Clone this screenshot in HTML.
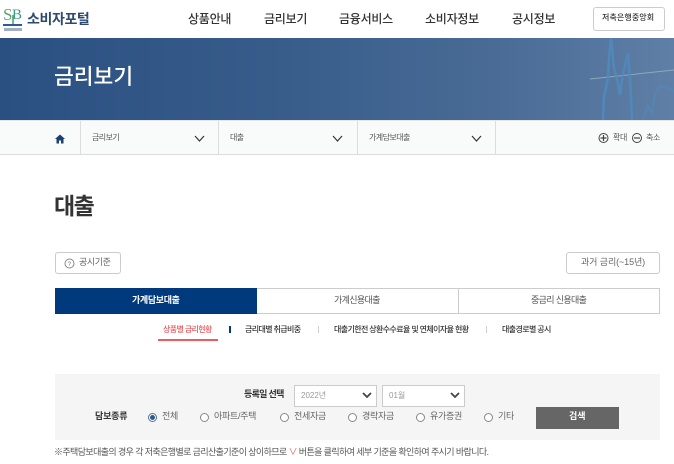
<!DOCTYPE html>
<html lang="ko"><head><meta charset="utf-8"><style>
html,body{margin:0;padding:0;width:674px;height:464px;overflow:hidden;background:#fff;font-family:"Liberation Sans","Noto Sans CJK KR",sans-serif;color:#333}
.t{position:absolute;white-space:nowrap;line-height:1}
.b{position:absolute;box-sizing:border-box}
.nav{font-size:12px;color:#333;top:13px;font-weight:500;letter-spacing:-.25px}
.cr{font-size:8px;color:#555;top:134px;letter-spacing:-.55px}
.sub{font-size:8px;color:#333;top:326px;font-weight:500;letter-spacing:-.62px}
.r{position:absolute;top:413px;width:7px;height:7px;border:1px solid #888;border-radius:50%;background:#fff}
.rl{font-size:9px;color:#666;top:412px;letter-spacing:-.3px}
</style></head><body>
<svg style="position:absolute;left:3px;top:5px" width="21" height="28" viewBox="0 0 21 28">
<text x="0" y="15" font-family="Liberation Serif" font-size="17" fill="#5aa56a">S</text>
<text x="9" y="14" font-family="Liberation Serif" font-size="15" fill="#3f9a8a">B</text>
<path d="M10 10V19" stroke="#4a9a5a" stroke-width="1.500"/>
<path d="M0 20H19" stroke="#2a5d96" stroke-width="2"/>
<rect x="1" y="23" width="18" height="3" fill="#9fb0c4"/>
</svg>
<div class="t" style="left:27px;top:12px;font-size:14px;font-weight:700;color:#2c4a70;letter-spacing:-.4px">소비자포털</div>
<div class="t nav" style="left:188px">상품안내</div>
<div class="t nav" style="left:264px">금리보기</div>
<div class="t nav" style="left:339px">금융서비스</div>
<div class="t nav" style="left:425px">소비자정보</div>
<div class="t nav" style="left:512px">공시정보</div>
<div class="b" style="left:593px;top:7px;width:72px;height:24px;border:1px solid #ccc;border-radius:3px"></div>
<div class="t" style="left:602px;top:14px;font-size:8px;color:#333;font-weight:500;letter-spacing:.1px">저축은행중앙회</div>

<div class="b" style="left:0;top:38px;width:674px;height:82px;background:linear-gradient(90deg,#2a5082 0%,#375c8a 40%,#4a6c96 75%,#5f7fa6 100%);overflow:hidden">
<svg width="674" height="82" style="position:absolute;left:0;top:0">
<path d="M590 41L674 32" stroke="#8fa6bf" stroke-width="1"/>
<path d="M603 82L604 58L608 40L609 20L611 0M611 0L614 30L618 45L620 57L623 35L628 15L630 40L632 82" stroke="#4f8cc0" stroke-width="2.500" fill="none" opacity=".8"/>
<path d="M643 82L648 68L652 76L655 55L660 48L668 50L674 54" stroke="#4f8cc0" stroke-width="2" fill="none" opacity=".6"/>
</svg></div>
<div class="t" style="left:54px;top:67px;font-size:21.500px;color:#fff;font-weight:500">금리보기</div>

<div class="b" style="left:0;top:120px;width:674px;height:35px;background:#f9fafa;border-top:1px solid #e4e6e8;border-bottom:1px solid #ddd"></div>
<div class="b" style="left:80px;top:121px;width:1px;height:33px;background:#ddd"></div>
<div class="b" style="left:218px;top:121px;width:1px;height:33px;background:#ddd"></div>
<div class="b" style="left:357px;top:121px;width:1px;height:33px;background:#ddd"></div>
<div class="b" style="left:495px;top:121px;width:1px;height:33px;background:#ddd"></div>
<svg style="position:absolute;left:55px;top:134px" width="10" height="10" viewBox="0 0 10 10"><path d="M5 .5L10 5H8.500V9.500H6V6.500H4V9.500H1.500V5H0Z" fill="#1c3f70"/></svg>
<div class="t cr" style="left:92px">금리보기</div>
<div class="t cr" style="left:230px">대출</div>
<div class="t cr" style="left:369px">가계담보대출</div>
<svg style="position:absolute;left:0;top:0" width="674" height="160">
<path d="M195 136L199.500 141L204 136M333 136L337.500 141L342 136M472 136L476.500 141L481 136" fill="none" stroke="#333" stroke-width="1.200"/>
<circle cx="603.500" cy="138" r="4.500" fill="none" stroke="#444"/><path d="M600.500 138H606.500M603.500 135V141" stroke="#444" stroke-width="1.200"/>
<circle cx="637" cy="138" r="4.500" fill="none" stroke="#444"/><path d="M634 138H640" stroke="#444" stroke-width="1.200"/>
</svg>
<div class="t" style="left:613px;top:134px;font-size:8px;color:#555;letter-spacing:-.3px">확대</div>
<div class="t" style="left:646px;top:134px;font-size:8px;color:#555;letter-spacing:-.3px">축소</div>

<div class="t" style="left:54px;top:195px;font-size:23px;font-weight:700;color:#333;letter-spacing:-1.500px">대출</div>

<div class="b" style="left:55px;top:252px;width:66px;height:22px;border:1px solid #ccc;border-radius:3px"></div>
<svg style="position:absolute;left:64px;top:258px" width="11" height="11"><circle cx="5.500" cy="5.500" r="4.500" fill="none" stroke="#888"/><text x="3.500" y="8" font-size="6.500" fill="#777" font-family="Liberation Sans">?</text></svg>
<div class="t" style="left:79px;top:258px;font-size:9px;color:#666;letter-spacing:-.4px">공시기준</div>
<div class="b" style="left:566px;top:252px;width:94px;height:22px;border:1px solid #ccc;border-radius:3px"></div>
<div class="t" style="left:581px;top:258px;font-size:9px;color:#666;letter-spacing:-.1px">과거 금리(~15년)</div>

<div class="b" style="left:55px;top:288px;width:605px;height:26px;border:1px solid #ccc"></div>
<div class="b" style="left:55px;top:288px;width:202px;height:26px;background:#003a7d"></div>
<div class="b" style="left:458px;top:288px;width:1px;height:26px;background:#ccc"></div>
<div class="t" style="left:132px;top:296px;font-size:9px;color:#fff;font-weight:700;letter-spacing:-.35px">가계담보대출</div>
<div class="t" style="left:334px;top:296px;font-size:9px;color:#555;letter-spacing:-.65px">가계신용대출</div>
<div class="t" style="left:531px;top:296px;font-size:9px;color:#555;letter-spacing:-.65px">중금리 신용대출</div>

<div class="t sub" style="left:163px;color:#e8585c">상품별 금리현황</div>
<div class="b" style="left:158px;top:339px;width:60px;height:2px;background:#f0595d"></div>
<div class="b" style="left:229px;top:326px;width:2px;height:7px;background:#003a7d"></div>
<div class="t sub" style="left:245px">금리대별 취급비중</div>
<div class="b" style="left:318px;top:326px;width:1px;height:7px;background:#ccc"></div>
<div class="t sub" style="left:334px">대출기한전 상환수수료율 및 연체이자율 현황</div>
<div class="b" style="left:486px;top:326px;width:1px;height:7px;background:#ccc"></div>
<div class="t sub" style="left:502px">대출경로별 공시</div>

<div class="b" style="left:55px;top:374px;width:605px;height:66px;background:#f5f5f5"></div>
<div class="t" style="left:244px;top:390px;font-size:9px;font-weight:700;color:#333;letter-spacing:-.7px">등록일 선택</div>
<div class="b" style="left:294px;top:385px;width:83px;height:22px;border:1px solid #ccc;background:#fff"></div>
<div class="t" style="left:301px;top:392px;font-size:8px;color:#999">2022년</div>
<div class="b" style="left:382px;top:385px;width:83px;height:22px;border:1px solid #ccc;background:#fff"></div>
<div class="t" style="left:389px;top:392px;font-size:8px;color:#999">01월</div>
<svg style="position:absolute;left:0;top:380px" width="674" height="30"><path d="M363 13L367 17L371 13M451 13L455 17L459 13" fill="none" stroke="#444" stroke-width="1.800"/></svg>
<div class="t" style="left:95px;top:412px;font-size:9px;font-weight:700;color:#333;letter-spacing:-.2px">담보종류</div>
<div class="r" style="left:148px;border-color:#5c6f8c"></div><div class="b" style="left:150px;top:415px;width:5px;height:5px;border-radius:50%;background:#2a5a9a"></div>
<div class="t rl" style="left:162px">전체</div>
<div class="r" style="left:200px"></div><div class="t rl" style="left:214px">아파트/주택</div>
<div class="r" style="left:280px"></div><div class="t rl" style="left:294px">전세자금</div>
<div class="r" style="left:348px"></div><div class="t rl" style="left:362px">경락자금</div>
<div class="r" style="left:416px"></div><div class="t rl" style="left:430px">유가증권</div>
<div class="r" style="left:484px"></div><div class="t rl" style="left:498px">기타</div>
<div class="b" style="left:536px;top:407px;width:83px;height:22px;background:#666"></div>
<div class="t" style="left:569px;top:412px;font-size:9px;font-weight:700;color:#fff">검색</div>
<div class="t" style="left:54px;top:448px;font-size:9px;color:#555;letter-spacing:-.61px">※주택담보대출의 경우 각 저축은행별로 금리산출기준이 상이하므로 <span style="color:#e8585c">∨</span> 버튼을 클릭하여 세부 기준을 확인하여 주시기 바랍니다.</div>
</body></html>
